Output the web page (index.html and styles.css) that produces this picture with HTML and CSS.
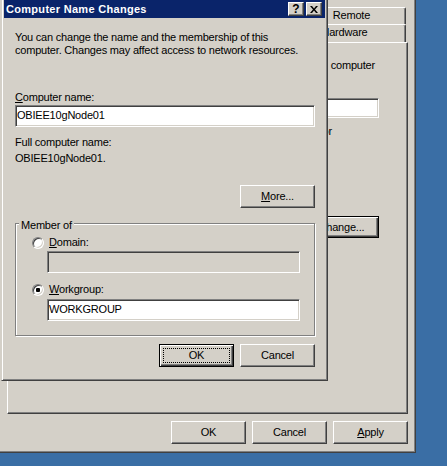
FILE: index.html
```html
<!DOCTYPE html>
<html lang="en">
<head>
  <meta charset="UTF-8" />
  <meta name="viewport" content="width=device-width, initial-scale=1.0"/>
  <title>Computer Name Changes</title>
  <link rel="stylesheet" href="styles.css">
</head>
<body>
  <!-- System Properties window behind the dialog (only its right side shows) -->
  <div class="window sys-props">
    <div class="tab-row tab-row-back">
      <span class="tab tab-advanced"></span>
      <span class="tab tab-updates"></span>
      <span class="tab tab-remote">Remote</span>
    </div>
    <div class="tab-row tab-row-front">
      <span class="tab tab-general"></span>
      <span class="tab tab-name"></span>
      <span class="tab tab-hardware">Hardware</span>
    </div>

    <div class="tab-panel">
      <p class="panel-text line-end">computer</p>
      <div class="panel-row desc-row">
        <input class="edit panel-edit" type="text" value="">
      </div>
      <p class="panel-text line-end example-end">or</p>
      <div class="panel-row change-row">
        <button class="btn btn-default"><u>C</u>hange...</button>
      </div>
    </div>

    <div class="button-row">
      <button class="btn">OK</button>
      <button class="btn">Cancel</button>
      <button class="btn"><u>A</u>pply</button>
    </div>
  </div>

  <!-- Computer Name Changes dialog -->
  <div class="window dialog">
    <div class="titlebar">
      <span class="title">Computer Name Changes</span>
      <div class="caption-buttons">
        <button class="caption-btn">?</button>
        <button class="caption-btn">
          <svg width="8" height="7" viewBox="0 0 8 7"><path d="M0 0h2l2 2.5L6 0h2L5 3.5 8 7H6L4 4.5 2 7H0l3-3.5z" fill="#000"/></svg>
        </button>
      </div>
    </div>

    <div class="dialog-body">
      <p class="intro">You can change the name and the membership of this<br>computer. Changes may affect access to network resources.</p>

      <label class="field-label"><u>C</u>omputer name:</label>
      <input class="edit" type="text" value="OBIEE10gNode01">

      <div class="full-label">Full computer name:</div>
      <div class="full-value">OBIEE10gNode01.</div>

      <button class="btn btn-more"><u>M</u>ore...</button>

      <fieldset class="group">
        <legend>Member of</legend>
        <label class="radio-row">
          <input class="radio" type="radio" name="member">
          <span><u>D</u>omain:</span>
        </label>
        <input class="edit edit-indent edit-disabled" type="text" value="" disabled>

        <label class="radio-row radio-row-2">
          <input class="radio" type="radio" name="member" checked>
          <span><u>W</u>orkgroup:</span>
        </label>
        <input class="edit edit-indent edit-workgroup" type="text" value="WORKGROUP">
      </fieldset>

      <div class="dialog-buttons">
        <button class="btn btn-default"><span class="focus-rect">OK</span></button>
        <button class="btn">Cancel</button>
      </div>
    </div>
  </div>
</body>
</html>
```

FILE: styles.css
```css
:root {
  --face: #d4d0c8;
  --shadow: #808080;
  --dark: #404040;
  --light: #fff;
  --title: #0a246a;
  --desktop: #3a6ea5;
}

* {
  box-sizing: border-box;
}

body {
  margin: 0;
  width: 447px;
  height: 466px;
  overflow: hidden;
  position: relative;
  background: var(--desktop);
  font-family: "Liberation Sans", Arial, sans-serif;
  font-size: 11px;
  letter-spacing: -0.2px;
  color: #000;
}

p {
  margin: 0;
}

u {
  text-decoration: underline;
  text-underline-offset: 1px;
}

/* window frame */
.window {
  position: absolute;
  background: var(--face);
  border: 1px solid;
  border-color: var(--face) var(--dark) var(--dark) var(--face);
  box-shadow: inset 1px 1px var(--light), inset -1px -1px var(--shadow);
}

/* buttons */
.btn {
  width: 75px;
  height: 23px;
  padding: 0;
  background: var(--face);
  border: 1px solid;
  border-color: var(--light) var(--dark) var(--dark) var(--light);
  box-shadow: inset -1px -1px var(--shadow);
  font: inherit;
  letter-spacing: inherit;
  color: #000;
  line-height: 19px;
}

.btn-default {
  border-color: #000;
  box-shadow: inset 1px 1px var(--light), inset -1px -1px var(--dark), inset -2px -2px var(--shadow);
}

/* edits */
.edit {
  display: block;
  width: 100%;
  height: 22px;
  padding: 0 1px 2px;
  background: #fff;
  border: 1px solid;
  border-color: var(--shadow) var(--light) var(--light) var(--shadow);
  box-shadow: inset 1px 1px var(--dark), inset -1px -1px var(--face);
  font: inherit;
  letter-spacing: inherit;
  color: #000;
  outline: none;
}

/* ---------- System Properties (behind) ---------- */
.sys-props {
  left: -20px;
  top: -3px;
  right: 31px;
  bottom: 13px;
  padding: 9px 7px 8px 26px;
  display: flex;
  flex-direction: column;
}

.tab-row {
  display: flex;
  margin: 0 2px;
}

.tab-row-back {
  height: 17px;
}

.tab-row-front {
  height: 18px;
}

.tab {
  border: 1px solid;
  border-bottom: none;
  border-color: var(--light) var(--dark) transparent var(--light);
  border-radius: 2px 2px 0 0;
  box-shadow: inset -1px 0 var(--shadow);
  text-align: center;
  line-height: 15px;
  white-space: nowrap;
  overflow: hidden;
}

.tab-row-front .tab {
  line-height: 14px;
}

.tab-advanced { width: 130px; }
.tab-updates { width: 158px; }
.tab-remote { width: 109px; }
.tab-general { width: 120px; }
.tab-name { width: 154px; }
.tab-hardware { width: 123px; }

.tab-panel {
  flex: 1;
  border: 1px solid;
  border-color: var(--light) var(--dark) var(--dark) var(--light);
  box-shadow: inset -1px -1px var(--shadow);
  padding: 16px 28px 0 15px;
}

.panel-text {
  line-height: 13px;
}

.line-end {
  text-align: right;
  padding-right: 4px;
  white-space: nowrap;
}

.example-end {
  margin-top: 7px;
  padding-right: 47px;
}

.panel-row {
  display: flex;
  align-items: center;
}

.desc-row {
  margin-top: 26px;
  padding-left: 118px;
}

.panel-edit {
  height: 20px;
  padding-bottom: 1px;
}

.change-row {
  margin-top: 78px;
  justify-content: flex-end;
}

.change-row .btn {
  height: 22px;
  line-height: 18px;
}

.button-row {
  display: flex;
  justify-content: flex-end;
  gap: 6px;
  margin-top: 7px;
}

/* ---------- Computer Name Changes dialog ---------- */
.dialog {
  left: 1px;
  top: -3px;
  width: 327px;
  height: 384px;
  padding: 2px;
  display: flex;
  flex-direction: column;
}

.titlebar {
  height: 18px;
  background: var(--title);
  color: #fff;
  font-weight: bold;
  letter-spacing: 0.3px;
  line-height: 18px;
  display: flex;
  align-items: center;
  justify-content: space-between;
  padding: 0 3px 0 2px;
}

.caption-buttons {
  display: flex;
  gap: 2px;
}

.caption-btn {
  width: 16px;
  height: 14px;
  padding: 0;
  background: var(--face);
  border: 1px solid;
  border-color: var(--light) var(--dark) var(--dark) var(--light);
  box-shadow: inset -1px -1px var(--shadow);
  display: flex;
  align-items: center;
  justify-content: center;
  font: bold 12px "Liberation Sans", Arial, sans-serif;
  color: #000;
}

.dialog-body {
  flex: 1;
  padding: 13px 10px 0 11px;
  display: flex;
  flex-direction: column;
}

.intro {
  line-height: 13px;
}

.field-label {
  margin-top: 34px;
  line-height: 13px;
}

.dialog-body > .edit {
  margin-top: 1px;
}

.full-label {
  margin-top: 9px;
  line-height: 13px;
}

.full-value {
  margin-top: 3px;
  line-height: 13px;
}

.btn-more {
  align-self: flex-end;
  margin-top: 20px;
}

.group {
  margin: 7px 0 0;
  padding: 4px 14px 14px 16px;
  border: 1px solid var(--shadow);
  box-shadow: inset 1px 1px var(--light), 1px 1px var(--light);
  min-width: 0;
}

.group legend {
  margin-left: -13px;
  padding: 4px 2px 0;
  line-height: 13px;
  background: var(--face);
}

.radio-row {
  display: flex;
  align-items: center;
  height: 13px;
  line-height: 13px;
}

.radio-row-2 {
  margin-top: 10px;
}

.radio {
  appearance: none;
  width: 12px;
  height: 12px;
  margin: 0 5px 0 0;
  border-radius: 50%;
  background: #fff;
  border: 1px solid;
  border-color: var(--shadow) var(--light) var(--light) var(--shadow);
  box-shadow: inset 1px 1px var(--dark), inset -1px -1px var(--face);
}

.radio:checked {
  background: radial-gradient(circle, #000 2px, #fff 2.5px);
}

.edit-indent {
  margin-left: 15px;
  width: calc(100% - 15px);
}

.group .edit-disabled {
  margin-top: 2px;
  background: var(--face);
}

.edit-workgroup {
  margin-top: 3px;
}

.dialog-buttons {
  display: flex;
  justify-content: flex-end;
  gap: 6px;
  margin-top: 8px;
}

.dialog-buttons .btn-default {
  padding: 3px;
}

.focus-rect {
  display: block;
  height: 100%;
  border: 1px dotted #000;
  line-height: 13px;
}
```
